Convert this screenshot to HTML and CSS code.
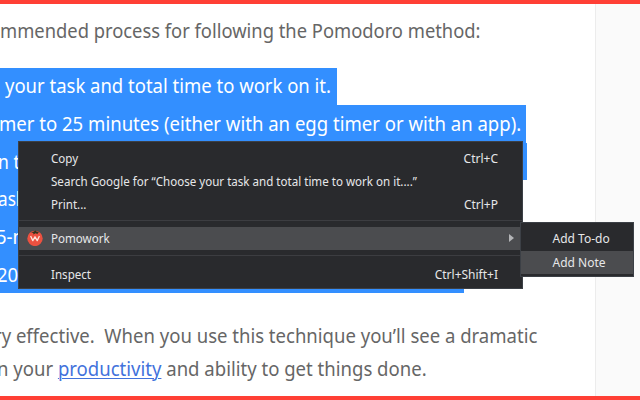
FILE: index.html
```html
<!DOCTYPE html>
<html lang="en">
<head>
<meta charset="utf-8">
<title>Pomodoro method</title>
<link rel="stylesheet" href="styles.css">
</head>
<body>
<div class="frame">
  <main class="article">
    <p class="intro"><span class="copy">mmended process for following the Pomodoro method:</span></p>
    <div class="steps">
      <div class="step step-1"><span class="copy">your task and total time to work on it.</span></div>
      <div class="step step-2"><span class="copy">mer to 25 minutes (either with an egg timer or with an app).</span></div>
      <div class="step step-3"><span class="copy">n t</span></div>
      <div class="step step-4"><span class="copy">ask</span></div>
      <div class="step step-5"><span class="copy">5-m</span></div>
      <div class="step step-6"><span class="copy">20</span></div>
    </div>
    <p class="outro">
      <span class="copy line-1">ry effective.&nbsp; When you use this technique you’ll see a dramatic</span>
      <span class="copy line-2">n your <a class="link">productivity</a> and ability to get things done.</span>
    </p>
  </main>
  <aside class="sidebar"></aside>
</div>

<div class="menu">
  <div class="item"><span class="label">Copy</span><span class="key">Ctrl+C</span></div>
  <div class="item"><span class="label">Search Google for “Choose your task and total time to work on it....”</span></div>
  <div class="item"><span class="label">Print...</span><span class="key">Ctrl+P</span></div>
  <div class="rule"></div>
  <div class="item active">
    <svg class="logo" viewBox="0 0 16 16">
      <circle cx="8" cy="8.4" r="7.7" fill="#ec5140"/>
      <path d="M4 2.2 7 1.6 8.2.2 9.4 1.5l3 .5-1.8 1 .3 1.2-2.3-.9L6.2 4.4l.2-1.3z" fill="#30351f"/>
      <path d="M3.6 6 5.8 10.6 8 6.8l2.2 3.8L12.4 6" fill="none" stroke="#fde3da" stroke-width="1.3" stroke-linejoin="round"/>
    </svg>
    <span class="label">Pomowork</span>
    <svg class="arrow" viewBox="0 0 5 8"><path d="M0 0 5 4 0 8z" fill="#b4b5b7"/></svg>
  </div>
  <div class="rule rule-last"></div>
  <div class="item"><span class="label">Inspect</span><span class="key">Ctrl+Shift+I</span></div>
</div>

<div class="submenu">
  <div class="item">Add To-do</div>
  <div class="item active">Add Note</div>
</div>
</body>
</html>
```
FILE: styles.css
```css
* { box-sizing: border-box; }
body {
  margin: 0;
  width: 640px;
  height: 400px;
  overflow: hidden;
  position: relative;
  background: #fff;
  font-family: "Noto Sans", "Open Sans", sans-serif;
}
p { margin: 0; }
.frame {
  display: flex;
  height: 400px;
  border-top: 4px solid #ff3f35;
  border-bottom: 4px solid #ff3f35;
}
.article {
  width: 595px;
  overflow: hidden;
  color: #666;
  font-size: 19.5px;
}
.sidebar {
  flex: 1;
  background: #fafafa;
  border-left: 1px solid #ececec;
}
.copy {
  display: block;
  width: max-content;
  white-space: nowrap;
  transform: scaleX(.948);
  transform-origin: 0 50%;
}
.intro {
  height: 63.5px;
  padding-top: 10px;
  line-height: 33px;
}
.intro .copy { transform: scaleX(.941); }
.steps { color: #fff; }
.step {
  height: 37.65px;
  line-height: 37.6px;
  background: #338fff;
}
.step-1 { width: 337px; padding-left: 4.5px; line-height: 36.5px; }
.step-2 { width: 526px; }
.step-2 .copy { margin-left: -1px; transform: scaleX(.951); }
.step-3 { width: 527px; }
.step-3 .copy { margin-left: -2px; transform: scaleX(.9); }
.step-4 { width: 500px; }
.step-4 .copy { margin-left: -2px; transform: scaleX(.88); }
.step-5 { width: 500px; }
.step-5 .copy { margin-left: -4px; }
.step-6 { width: 464px; }
.step-6 .copy { margin-left: -3px; }
.outro {
  padding-top: 25.5px;
  line-height: 33px;
}
.line-1 { margin-left: -6px; transform: scaleX(.95); }
.line-2 { margin-left: -3px; transform: scaleX(.951); }
.link {
  color: #4272dc;
  text-decoration: underline;
  text-decoration-thickness: 1px;
  text-underline-offset: 2px;
}

.menu, .submenu {
  position: absolute;
  background: #292a2d;
  color: #e6e7e9;
  font-size: 12px;
  border: 1px solid #3c4046;
}
.menu {
  left: 18px;
  top: 141px;
  width: 505px;
  height: 148px;
  padding-top: 4.5px;
}
.item {
  display: flex;
  align-items: center;
  height: 23.4px;
  line-height: 23.4px;
  white-space: nowrap;
}
.menu .item {
  position: relative;
  padding: 0 24px 0 32px;
}
.label { transform: scaleX(.965); transform-origin: 0 50%; }
.key { margin-left: auto; }
.active { background: #4b4c4f; }
.rule {
  height: 1px;
  margin: 3.8px 0 5.2px;
  background: #3c3d41;
}
.rule-last { margin: 5px 0 6.6px; }
.logo {
  position: absolute;
  left: 8px;
  top: 3px;
  width: 16px;
  height: 16px;
}
.arrow { width: 5px; height: 8px; margin-left: auto; margin-right: -16px; }
.submenu {
  left: 520px;
  top: 222px;
  width: 114px;
  height: 55px;
  padding-top: 4.3px;
}
.submenu .item { padding-left: 31.5px; }
```
